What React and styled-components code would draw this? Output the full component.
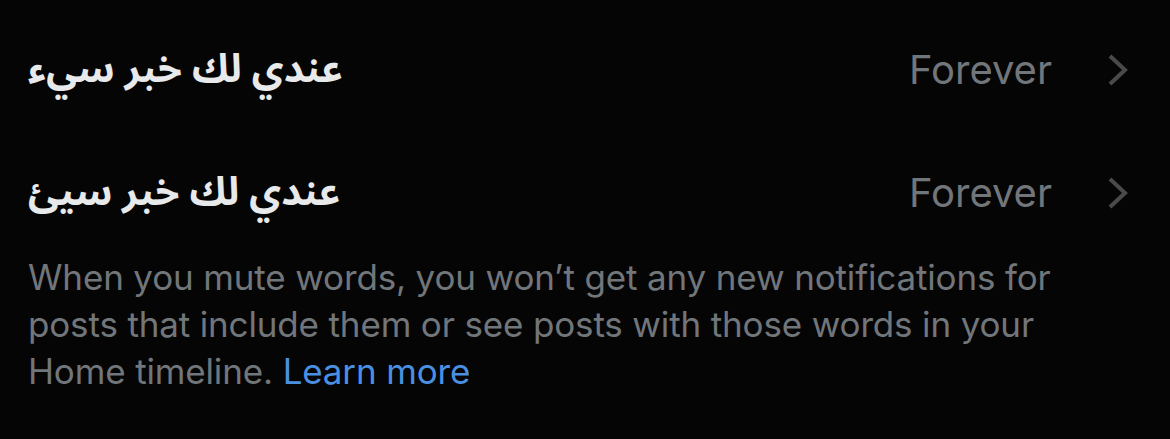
import React from "react";
import styled, { createGlobalStyle } from "styled-components";

const Global = createGlobalStyle`
  html, body { margin: 0; padding: 0; background: #050505; }
  body { font-family: Inter, "Open Sans", sans-serif; }
`;

const Page = styled.div`
  width: 1170px;
  height: 439px;
  background: #050505;
  box-sizing: border-box;
  padding: 8px 0 0 28px;
  overflow: hidden;
`;

const Row = styled.div`
  display: flex;
  align-items: center;
  height: 123px;
  padding-right: 40px;
`;

const Label = styled.div`
  flex: 1;
  color: #e7e9ea;
  font-family: "Noto Sans Arabic", "Noto Naskh Arabic", "Noto Sans", "DejaVu Sans", sans-serif;
  font-weight: 700;
  font-size: 39px;
  direction: rtl;
  text-align: left;
  unicode-bidi: plaintext;
`;

const Value = styled.div`
  color: #71767b;
  font-size: 40px;
  margin-right: 54px;
`;

const Chevron = styled.svg`
  width: 24px;
  height: 34px;
  display: block;
`;

const Note = styled.p`
  margin: 0;
  color: #71767b;
  font-size: 35px;
  line-height: 47px;
  letter-spacing: -0.15px;
  width: 1100px;
`;

const Link = styled.a`
  color: #4a90e2;
  text-decoration: none;
`;

const ChevronIcon = () => (
  <Chevron viewBox="0 0 24 34">
    <path d="M4 3 L19 17 L4 31" fill="none" stroke="#4a4a4c" strokeWidth="4" strokeLinecap="butt" />
  </Chevron>
);

export default function App() {
  const rows = ["عندي لك خبر سيء", "عندي لك خبر سيئ"];
  return (
    <Page>
      <Global />
      {rows.map((r) => (
        <Row key={r}>
          <Label dir="rtl">{r}</Label>
          <Value>Forever</Value>
          <ChevronIcon />
        </Row>
      ))}
      <Note>
        When you mute words, you won’t get any new notifications for posts that include them or see posts with those words in your Home timeline. <Link href="#">Learn more</Link>
      </Note>
    </Page>
  );
}
